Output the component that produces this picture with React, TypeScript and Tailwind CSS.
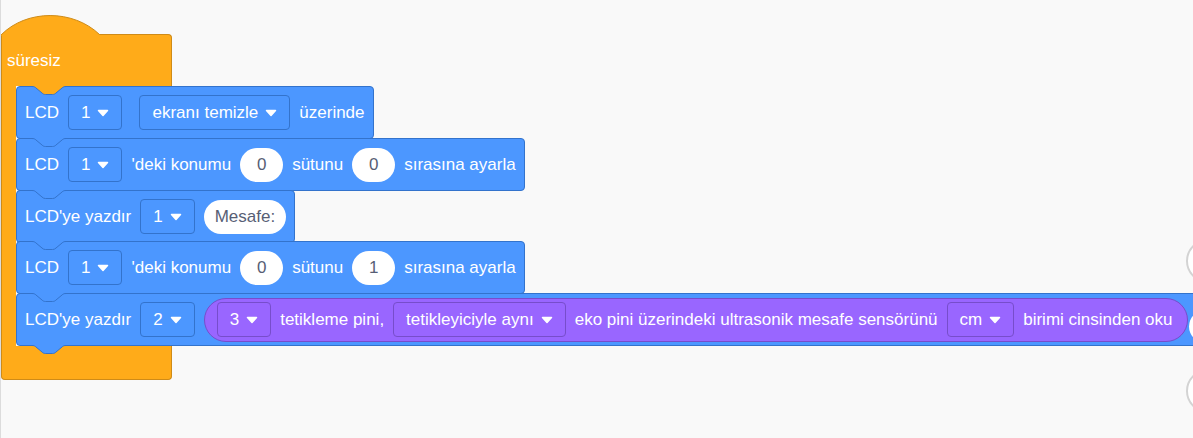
import type { ReactNode } from "react";

const NOTCH =
  "M0,0.5 C2,0.5 3,1 4,2 L10,7 C11,8 12,8.5 13.5,8.5 H20.5 C22,8.5 23,8 24,7 L30,2 C31,1 32,0.5 34,0.5";

function Arrow() {
  return (
    <svg width="12" height="8" viewBox="0 0 12 8" className="shrink-0">
      <path d="M1.5,1.5 H10.5 L6,6.5 Z" fill="#fff" stroke="#fff" strokeWidth="1.5" strokeLinejoin="round" />
    </svg>
  );
}

function Dropdown({ label, purple }: { label: string; purple?: boolean }) {
  return (
    <div
      className={`flex h-[35px] shrink-0 items-center gap-[7px] rounded-[4px] border pl-[12px] pr-[12px] ${
        purple ? "border-[#774dcb] bg-[#9966ff]" : "border-[#3373cc] bg-[#4c97ff]"
      }`}
    >
      <span>{label}</span>
      <Arrow />
    </div>
  );
}

function Input({ value }: { value: string }) {
  return (
    <div className="flex h-[34px] min-w-[43px] shrink-0 items-center justify-center rounded-full bg-white px-[11px] text-[#575e75]">
      {value}
    </div>
  );
}

function Block({
  children,
  notchFill = "#4c97ff",
  tab,
  className = "",
}: {
  children: ReactNode;
  notchFill?: string;
  tab?: boolean;
  className?: string;
}) {
  return (
    <div
      className={`relative flex shrink-0 items-center gap-[9px] whitespace-nowrap rounded-[4px] border border-[#3373cc] bg-[#4c97ff] pl-[8px] pr-[8px] ${className}`}
    >
      <svg className="absolute left-[15px] top-[-1px]" width="34" height="10" viewBox="0 0 34 10">
        <path d={NOTCH + " V0 H0 Z"} fill={notchFill} />
        <path d={NOTCH} fill="none" stroke="#3373cc" />
      </svg>
      {children}
      {tab && (
        <svg className="absolute left-[15px] top-full overflow-visible" width="34" height="10" viewBox="0 0 34 10">
          <path d={"M0,0 V0.5 " + NOTCH.slice(7) + " V0 Z"} fill="#4c97ff" />
          <path d={NOTCH} fill="none" stroke="#3373cc" />
        </svg>
      )}
    </div>
  );
}

export default function App() {
  return (
    <div className="relative h-[438px] w-[1193px] overflow-hidden border-l border-[#dcdcdc] bg-[#f9f9f9] pt-[34px] font-['Liberation_Sans',Arial,sans-serif] text-[17px] text-white">
      <div className="flex flex-col items-start">
        {/* hat: süresiz */}
        <div className="relative flex h-[52px] w-[171px] items-center rounded-tr-[4px] border-x border-t border-[#cf8b17] bg-[#ffab19] pl-[5px]">
          <svg className="absolute left-[-1px] top-[-21px] overflow-visible" width="100" height="22" viewBox="0 0 100 22">
            <path d="M0.5,20.5 C26,-4.8 72,-4.8 98.5,20.5 L98.5,22 L0.5,22 Z" fill="#ffab19" />
            <path d="M0.5,20.5 C26,-4.8 72,-4.8 98.5,20.5" fill="none" stroke="#cf8b17" />
          </svg>
          <span className="relative">süresiz</span>
        </div>

        <div className="flex">
          <div className="w-[15px] border-l border-[#cf8b17] bg-[#ffab19]" />
          <div className="flex flex-col items-start">
            <Block notchFill="#ffab19" className="h-[53px]">
              <span>LCD</span>
              <Dropdown label="1" />
              <div className="ml-[8px]">
                <Dropdown label="ekranı temizle" />
              </div>
              <span>üzerinde</span>
            </Block>

            <Block className="-mt-px h-[53px]">
              <span>LCD</span>
              <Dropdown label="1" />
              <span>'deki konumu</span>
              <Input value="0" />
              <span>sütunu</span>
              <Input value="0" />
              <span>sırasına ayarla</span>
            </Block>

            <Block className="-mt-px h-[53px]">
              <span>LCD'ye yazdır</span>
              <Dropdown label="1" />
              <Input value="Mesafe:" />
            </Block>

            <Block className="-mt-[2px] h-[53px]">
              <span>LCD</span>
              <Dropdown label="1" />
              <span>'deki konumu</span>
              <Input value="0" />
              <span>sütunu</span>
              <Input value="1" />
              <span>sırasına ayarla</span>
            </Block>

            <Block className="-mt-px h-[53px]" tab>
              <span>LCD'ye yazdır</span>
              <Dropdown label="2" />
              <div className="flex h-[44px] shrink-0 items-center gap-[9px] rounded-full border border-[#774dcb] bg-[#9966ff] pl-[12px] pr-[14px]">
                <Dropdown label="3" purple />
                <span>tetikleme pini,</span>
                <Dropdown label="tetikleyiciyle aynı" purple />
                <span>eko pini üzerindeki ultrasonik mesafe sensörünü</span>
                <Dropdown label="cm" purple />
                <span>birimi cinsinden oku</span>
              </div>
            </Block>
          </div>
        </div>

        <div className="h-[34px] w-[171px] rounded-b-[4px] border-x border-b border-[#cf8b17] bg-[#ffab19]" />
      </div>

      {/* zoom controls at the right edge */}
      <div className="absolute left-[1185px] top-[239px] h-[44px] w-[44px] rounded-full border-2 border-[#d3d3d3] bg-white" />
      <div className="absolute left-[1188px] top-[310px] h-[33px] w-[30px] rounded-l-full bg-white" />
      <div className="absolute left-[1185px] top-[369px] h-[44px] w-[44px] rounded-full border-2 border-[#d3d3d3] bg-white" />
    </div>
  );
}
